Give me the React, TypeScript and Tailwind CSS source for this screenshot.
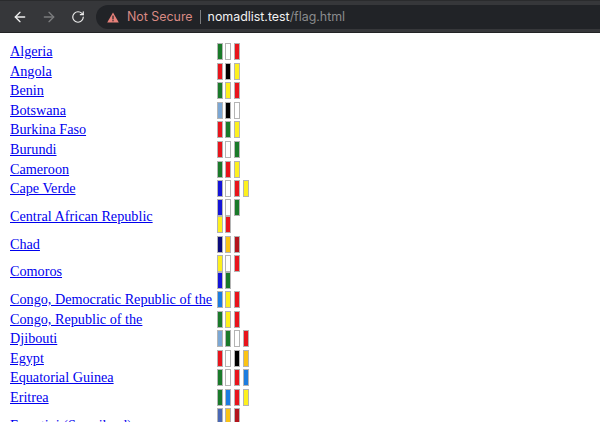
import { ArrowLeft, ArrowRight, RotateCw } from "lucide-react";

const G = "bg-[#1a7a2a]", W = "bg-white", R = "bg-[#e8141c]", K = "bg-black", Y = "bg-[#fdf01e]", L = "bg-[#7ba7d4]",
  B = "bg-[#1414d8]", N = "bg-[#0a0a7c]", O = "bg-[#fbc314]", D = "bg-[#b4141c]", S = "bg-[#1c7ce0]", E = "bg-[#4a68b4]";

type Row = { name: string; bars: string[][]; tall?: boolean };

const rows: Row[] = [
  { name: "Algeria", bars: [[G, W, R]] },
  { name: "Angola", bars: [[R, K, Y]] },
  { name: "Benin", bars: [[G, Y, R]] },
  { name: "Botswana", bars: [[L, K, W]] },
  { name: "Burkina Faso", bars: [[R, G, Y]] },
  { name: "Burundi", bars: [[R, W, G]] },
  { name: "Cameroon", bars: [[G, R, Y]] },
  { name: "Cape Verde", bars: [[B, W, R, Y]] },
  { name: "Central African Republic", bars: [[B, W, G], [Y, R]], tall: true },
  { name: "Chad", bars: [[N, O, D]] },
  { name: "Comoros", bars: [[Y, W, R], [B, G]], tall: true },
  { name: "Congo, Democratic Republic of the", bars: [[S, Y, R]] },
  { name: "Congo, Republic of the", bars: [[G, Y, R]] },
  { name: "Djibouti", bars: [[L, G, W, R]] },
  { name: "Egypt", bars: [[R, W, K, O]] },
  { name: "Equatorial Guinea", bars: [[G, W, R, S]] },
  { name: "Eritrea", bars: [[G, S, R, Y]] },
  { name: "Eswatini (Swaziland)", bars: [[E, O, D], [K, W]], tall: true },
];

function Bars({ lines }: { lines: string[][] }) {
  return (
    <div className="flex flex-col">
      {lines.map((line, i) => (
        <div key={i} className="flex gap-[2.7px]">
          {line.map((c, j) => (
            <div key={j} className={`w-[6px] h-[17px] box-border border border-[#b4b4b4] ${c}`} />
          ))}
        </div>
      ))}
    </div>
  );
}

export default function App() {
  return (
    <div className="w-[600px] h-[422px] overflow-hidden bg-white flex flex-col">
      <div className="h-[33px] shrink-0 bg-[#36373a] flex items-center pl-[12px] pt-px border-t border-b border-t-[#2a2b2d] border-b-[#222325]">
        <ArrowLeft size={16} strokeWidth={2} className="text-[#eeeeee]" />
        <ArrowRight size={16} strokeWidth={2} className="text-[#7b7c7e] ml-[13px]" />
        <RotateCw size={14} strokeWidth={2} className="text-[#eeeeee] ml-[14px]" />
        <div className="ml-[11px] h-[24px] flex-1 rounded-l-[12px] bg-[#212327] flex items-center pl-[11px] font-['Inter',sans-serif] text-[12.4px]">
          <svg width="12" height="11" viewBox="0 0 12 11" className="shrink-0">
            <path d="M6 0.5 L11.8 10.6 H0.2 Z" fill="#e8817a" />
            <rect x="5.4" y="3.6" width="1.2" height="3.8" fill="#212327" />
            <rect x="5.4" y="8.1" width="1.2" height="1.2" fill="#212327" />
          </svg>
          <span className="ml-[8px] text-[#d98a84]">Not Secure</span>
          <span className="ml-[7px] w-px h-[14px] bg-[#7b7c7e]" />
          <span className="ml-[7px] text-[#f2f2f2]">nomadlist.test</span>
          <span className="text-[#8a8b8d]">/flag.html</span>
        </div>
      </div>
      <div className="pl-[10px] pt-[9px] font-['Liberation_Serif',serif] text-[14.2px] leading-[17px]">
        {rows.map((r) => (
          <div key={r.name} className={`flex items-center ${r.tall ? "h-[35px] mt-[0.5px] mb-[0.5px]" : "h-[19.55px]"}`}>
            <a href="#" className="w-[206.5px] shrink-0 text-[#0000ee] underline whitespace-nowrap">{r.name}</a>
            <Bars lines={r.bars} />
          </div>
        ))}
      </div>
    </div>
  );
}
